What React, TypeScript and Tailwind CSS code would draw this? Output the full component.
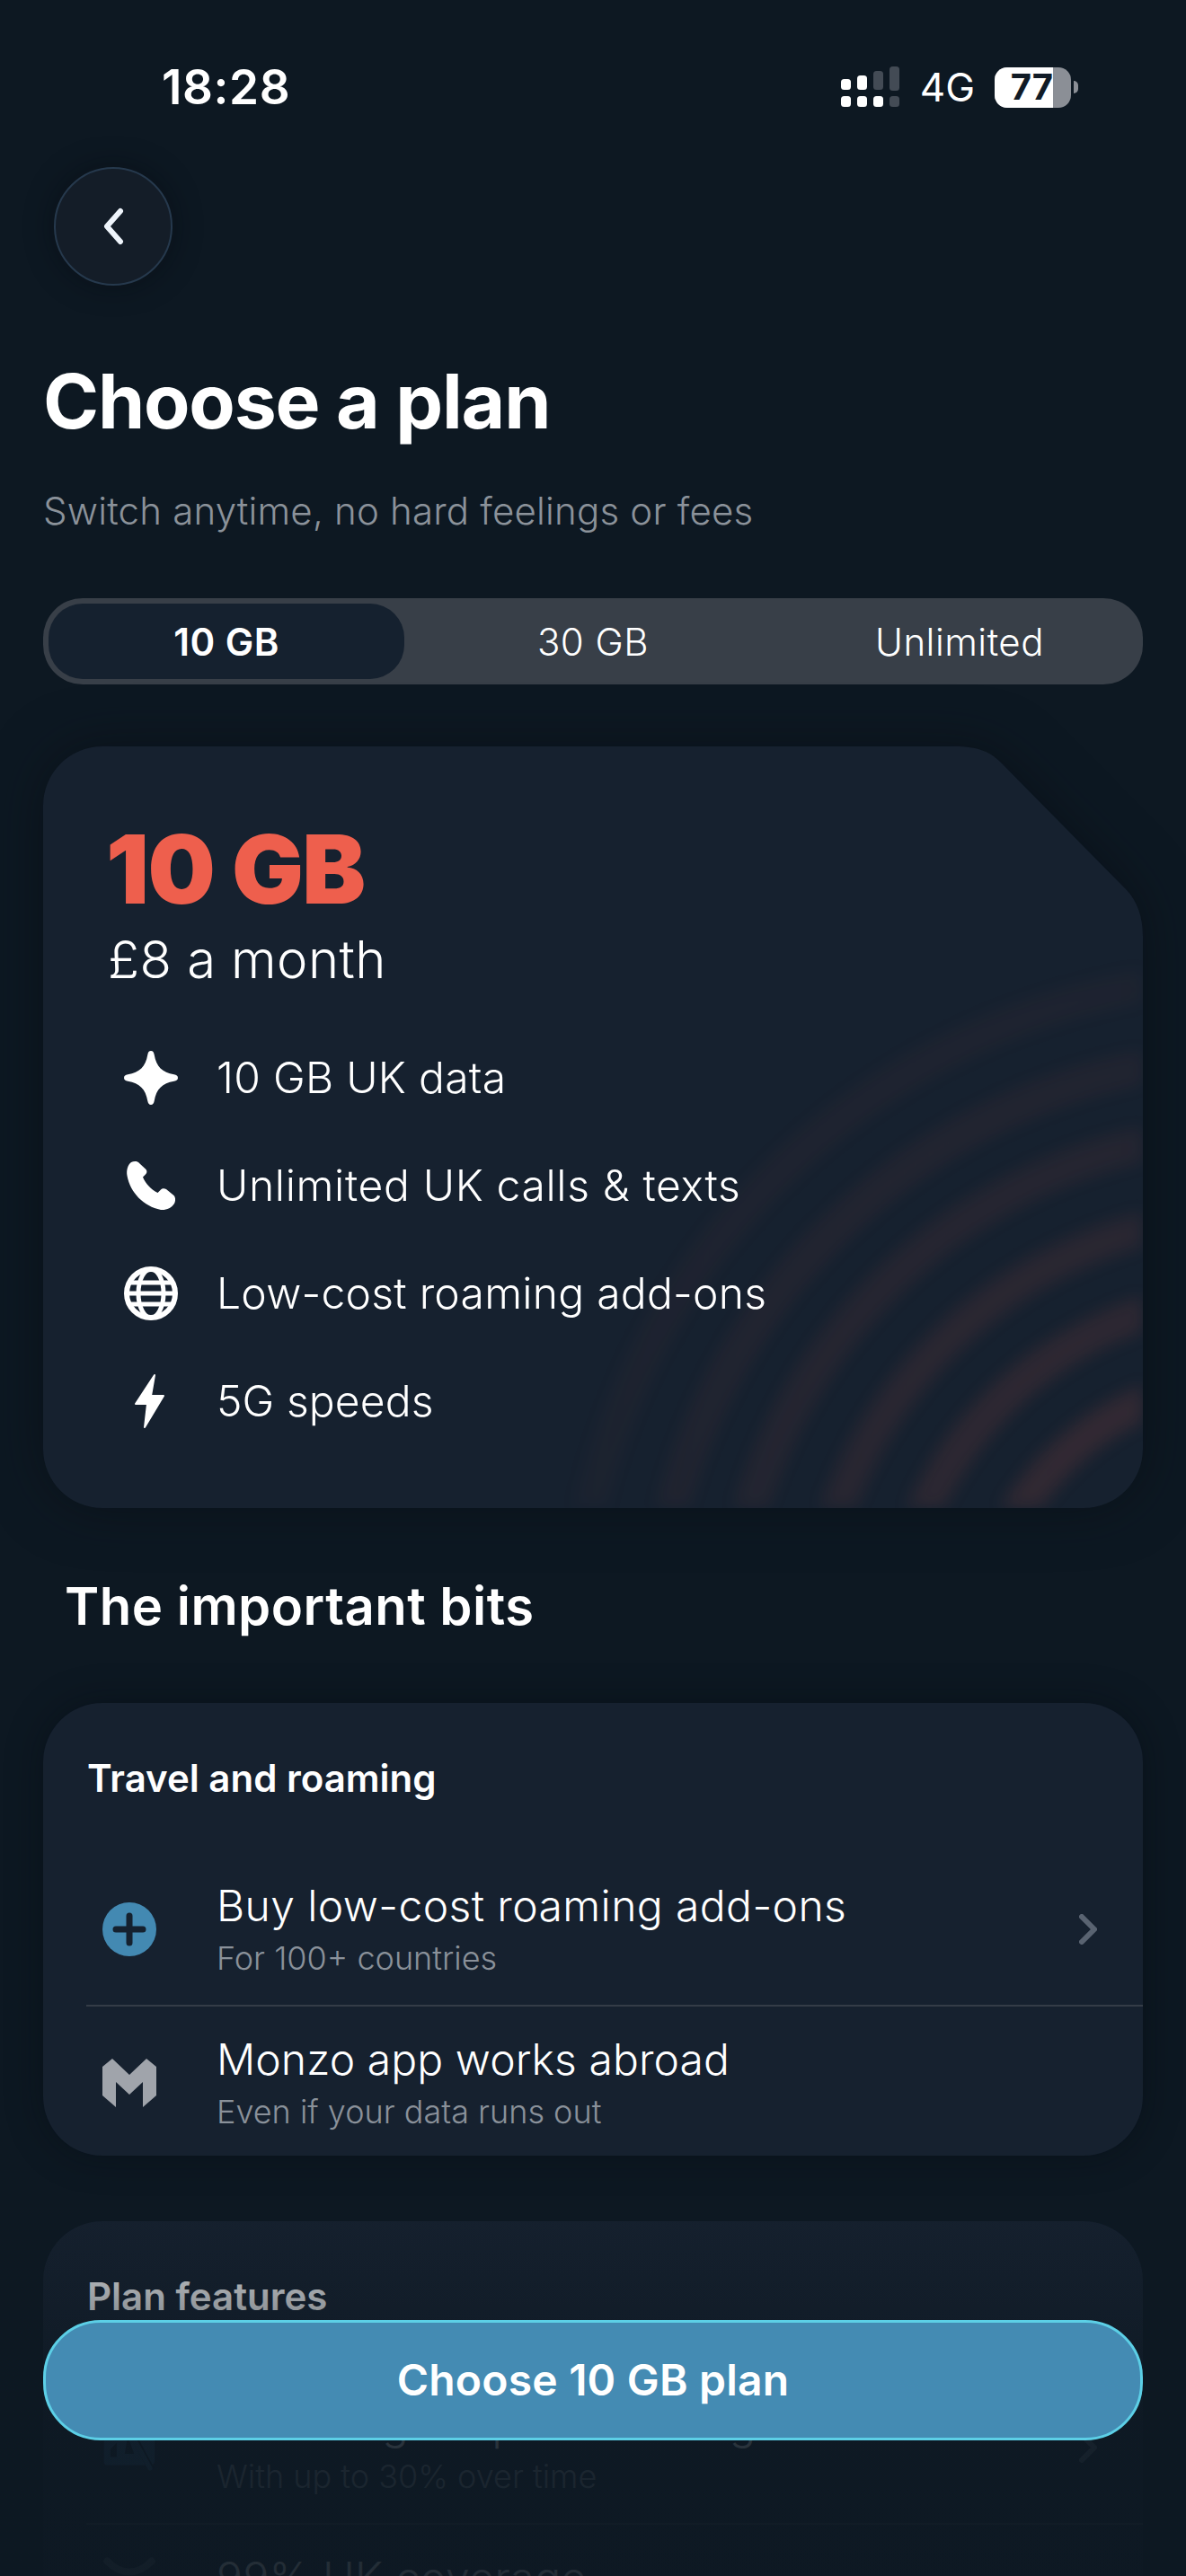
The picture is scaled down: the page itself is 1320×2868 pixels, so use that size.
import type { ReactNode } from 'react'

function SignalIcon() {
  return (
    <svg width="66" height="46" viewBox="0 0 66 46">
      <rect x="0" y="14" width="11" height="12" rx="3.500" fill="#fff" />
      <rect x="18" y="10" width="11" height="16" rx="3.500" fill="#fff" />
      <rect x="36" y="5" width="11" height="21" rx="3.500" fill="#434b55" />
      <rect x="54" y="0" width="11" height="27" rx="3.500" fill="#434b55" />
      <rect x="0" y="33" width="11" height="12" rx="3.500" fill="#fff" />
      <rect x="18" y="33" width="11" height="12" rx="3.500" fill="#fff" />
      <rect x="36" y="33" width="11" height="12" rx="3.500" fill="#fff" />
      <rect x="54" y="33" width="11" height="12" rx="3.500" fill="#434b55" />
    </svg>
  )
}

function StarIcon() {
  return (
    <svg width="60" height="60" viewBox="0 0 60 60" fill="#fff">
      <path d="M30 0c2.200 0 3.200 1.600 3.700 4.200C36 17.500 42.500 24 55.800 26.300c2.600.5 4.200 1.500 4.200 3.700s-1.600 3.200-4.200 3.700C42.500 36 36 42.500 33.700 55.800c-.5 2.600-1.500 4.200-3.700 4.200s-3.200-1.600-3.700-4.200C24 42.500 17.500 36 4.200 33.700 1.600 33.200 0 32.200 0 30s1.600-3.200 4.200-3.700C17.500 24 24 17.500 26.300 4.200 26.800 1.600 27.800 0 30 0Z" />
    </svg>
  )
}

function PhoneIcon() {
  return (
    <svg width="60" height="60" viewBox="0 0 60 60" fill="#fff">
      <path d="M8 4C11 2.500 15 2.500 17 5L24.500 12C26 14 25.500 16 24 17.500L21 20.500C24 28 30 34 37.500 38L41 34.500C42.500 33 45 33 47 34L55.500 41C57.500 43 57.500 47.500 56 50C53 55 47 57.500 41 57C22 53 7 38 3.500 19C2.500 13 4 7 8 4Z" />
    </svg>
  )
}

function GlobeIcon() {
  return (
    <svg width="60" height="60" viewBox="0 0 60 60" fill="none" stroke="#fff" strokeWidth="5">
      <circle cx="30" cy="30" r="27" strokeWidth="6" />
      <ellipse cx="30" cy="30" rx="14" ry="27" />
      <path d="M4 18H56M2 30H58M4 42H56" />
    </svg>
  )
}

function BoltIcon() {
  return (
    <svg width="60" height="60" viewBox="0 0 60 60" fill="#fff" stroke="#fff" strokeWidth="2" strokeLinejoin="round">
      <path d="M34 1L13 33H26L23 59L44 24H30Z" />
    </svg>
  )
}

function PlusIcon() {
  return (
    <svg width="60" height="60" viewBox="0 0 60 60">
      <circle cx="30" cy="30" r="30" fill="#4389b2" />
      <path d="M30 15V45M15 30H45" stroke="#15212f" strokeWidth="7" strokeLinecap="round" />
    </svg>
  )
}

function MonzoIcon() {
  return (
    <svg width="60" height="54" viewBox="0 0 60 54" fill="#a0a4ab">
      <path d="M0 9L11 0L30 18L49 0L60 9V41L45 54V26L30 40L15 26V54L0 41Z" />
    </svg>
  )
}

function SlashedTagIcon() {
  return (
    <svg width="68" height="64" viewBox="0 0 68 64" fill="#2a5070">
      <path d="M2 4H66V48C66 52 64 54 60 54H6C3 54 2 52 2 50Z" />
      <path d="M10 34L18 26V44H10ZM32 18L40 40H28Z" fill="#0f1b27" />
      <path d="M34 8L62 60" stroke="#0f1b27" strokeWidth="8" />
      <path d="M30 4L60 58" stroke="#2a5070" strokeWidth="6" strokeLinecap="round" />
    </svg>
  )
}

function SignalArcIcon() {
  return (
    <svg width="68" height="54" viewBox="0 0 68 54" fill="none" stroke="#4a5663" strokeWidth="9" strokeLinecap="round">
      <path d="M6 6C24 24 44 24 62 6" />
    </svg>
  )
}

function Chevron() {
  return (
    <svg width="20" height="34" viewBox="0 0 20 34" fill="none" stroke="#596371" strokeWidth="6" strokeLinecap="round" strokeLinejoin="round">
      <path d="M3 3L17 17L3 31" />
    </svg>
  )
}

const features = [
  { icon: <StarIcon />, text: '10 GB UK data', tracking: 'tracking-[0.3px]' },
  { icon: <PhoneIcon />, text: 'Unlimited UK calls & texts', tracking: 'tracking-[0.65px]' },
  { icon: <GlobeIcon />, text: 'Low-cost roaming add-ons', tracking: 'tracking-[0.25px]' },
  { icon: <BoltIcon />, text: '5G speeds', tracking: 'tracking-[0.1px]' },
]

function Stripes() {
  return (
    <svg className="absolute inset-0 blur-[9px]" width="1224" height="848" viewBox="0 0 1224 848" fill="none">
      <defs>
        <radialGradient id="stripeFade" gradientUnits="userSpaceOnUse" cx="1224" cy="848" r="780">
          <stop offset="0" stopColor="#ee5f4d" stopOpacity="0.15" />
          <stop offset="0.45" stopColor="#ee5f4d" stopOpacity="0.08" />
          <stop offset="0.8" stopColor="#ee5f4d" stopOpacity="0.025" />
          <stop offset="1" stopColor="#ee5f4d" stopOpacity="0" />
        </radialGradient>
      </defs>
      {[315, 408, 498, 590, 674, 763].map(r => (
        <circle key={r} cx="1352" cy="1019" r={r} stroke="url(#stripeFade)" strokeWidth="38" />
      ))}
    </svg>
  )
}

function Row({ icon, title, sub, chevron, divider, tracking, className }: {
  icon: ReactNode
  title: string
  sub?: string
  chevron?: boolean
  divider?: boolean
  tracking?: string
  className?: string
}) {
  return (
    <div className={`ml-[48px] pl-[18px] pr-[51px] flex items-center ${divider ? 'border-b-[2px] border-[#343c47]' : ''} ${className}`}>
      <div className="w-[60px] flex justify-center shrink-0">{icon}</div>
      <div className="ml-[67px] flex-1">
        <p className={`text-[48px] leading-[58px] font-light text-white ${tracking}`}>{title}</p>
        {sub && <p className="mt-[6px] text-[36px] leading-[46px] font-light text-[#8a919a]">{sub}</p>}
      </div>
      {chevron && <Chevron />}
    </div>
  )
}

export default function App() {
  return (
    <div className="relative h-[2868px] w-[1320px] overflow-hidden bg-[#0d1822] font-['Inter',sans-serif] text-white">
      <div className="h-[186px] pt-[8px] pl-[180px] pr-[120px] flex items-center justify-between">
        <span className="text-[53px] font-semibold leading-none tracking-[0.6px]">18:28</span>
        <div className="flex items-center">
          <SignalIcon />
          <span className="ml-[22px] text-[44px] leading-none">4G</span>
          <div className="ml-[22px] flex items-center">
            <div className="flex h-[45px] w-[85px] rounded-[14px] bg-[#8b8f96]">
              <div className="flex w-[65px] items-center justify-end rounded-l-[14px] bg-white text-[40px] font-bold leading-none text-[#111b26]">77</div>
            </div>
            <div className="ml-[3px] h-[14px] w-[5px] rounded-r-full bg-[#8b8f96]"></div>
          </div>
        </div>
      </div>

      <button className="ml-[60px] flex h-[132px] w-[132px] items-center justify-center rounded-full border-2 border-[#26394d] bg-[#141d28] shadow-[0_0_30px_rgba(5,10,15,0.5)]">
        <svg width="28" height="46" viewBox="0 0 28 46" fill="none" stroke="#eef4fb" strokeWidth="6" strokeLinecap="round" strokeLinejoin="round">
          <path d="M22 6L7 23L22 40" />
        </svg>
      </button>

      <h1 className="mt-[81px] ml-[48px] text-[84px] font-bold leading-[96px] tracking-[-1.2px]">Choose a plan</h1>
      <p className="mt-[48px] ml-[48px] text-[42px] font-light leading-[52px] tracking-[0.2px] text-[#8b929a]">Switch anytime, no hard feelings or fees</p>

      <div className="mt-[71px] mx-[48px] grid h-[96px] grid-cols-3 rounded-[44px] bg-[#383f48] text-[42px] font-light tracking-[0.5px]">
        <div className="p-[6px]">
          <div className="flex h-full items-center justify-center rounded-[38px] bg-[#15212f] font-semibold">10 GB</div>
        </div>
        <div className="flex items-center justify-center">30 GB</div>
        <div className="flex items-center justify-center">Unlimited</div>
      </div>

      <div className="mt-[69px] mx-[48px] drop-shadow-[0_0_30px_rgba(5,10,15,0.5)]">
        <div className="relative h-[848px] bg-[#16212f] [clip-path:path('M66_0H1015C1040_0_1055_6_1067_19L1205_159C1218_172_1224_190_1224_212V782A66_66_0_0_1_1158_848H66A66_66_0_0_1_0_782V66A66_66_0_0_1_66_0Z')]">
          <Stripes />
          <div className="relative pt-[85px]">
            <p className="ml-[70px] text-[106px] font-black leading-[104px] tracking-[-1.5px] text-[#ee5f4d]">10 GB</p>
            <p className="mt-[18px] ml-[72px] text-[58px] font-light leading-[60px] tracking-[0.4px]">£8 a month</p>
            <div className="mt-[42px] pl-[90px]">
              {features.map(f => (
                <div key={f.text} className="flex h-[120px] items-center gap-[43px]">
                  <div className="shrink-0">{f.icon}</div>
                  <span className={`text-[48px] font-light ${f.tracking}`}>{f.text}</span>
                </div>
              ))}
            </div>
          </div>
        </div>
      </div>

      <h2 className="mt-[74px] ml-[72px] text-[58px] font-semibold leading-[70px] tracking-[0.5px]">The important bits</h2>

      <div className="mt-[73px] mx-[48px] h-[504px] rounded-[66px] bg-[#16212f] pt-[59px] shadow-[0_0_40px_rgba(5,10,15,0.4)]">
        <h3 className="ml-[49px] text-[42px] font-semibold leading-[50px]">Travel and roaming</h3>
        <Row className="mt-[88px] pb-[29px]" tracking="tracking-[0.4px]" icon={<PlusIcon />} title="Buy low-cost roaming add-ons" sub="For 100+ countries" chevron divider />
        <Row className="pt-[30px]" tracking="tracking-[0.1px]" icon={<MonzoIcon />} title="Monzo app works abroad" sub="Even if your data runs out" />
      </div>

      <div className="mt-[73px] mx-[48px] rounded-[66px] bg-[#16212f] pt-[59px] pb-[40px]">
        <h3 className="ml-[49px] text-[42px] font-semibold leading-[50px]">Plan features</h3>
        <Row className="mt-[88px] pb-[29px]" tracking="tracking-[0.5px]" icon={<SlashedTagIcon />} title="Reducing bill price as long" sub="With up to 30% over time" chevron divider />
        <Row className="pt-[30px]" tracking="tracking-[0.5px]" icon={<SignalArcIcon />} title="99% UK coverage" />
      </div>

      {/* fade under the sticky button */}
      <div className="absolute inset-x-0 bottom-0 h-[430px] bg-gradient-to-b from-[#0d182200] via-[#0d1822e0] via-[60%] to-[#0d1822e8]"></div>

      <button className="absolute bottom-[151px] left-[48px] right-[48px] flex h-[134px] items-center justify-center rounded-[64px] border-[3px] border-[#5ccfe6] bg-[#448bb3] text-[48px] font-semibold tracking-[0.2px] text-white">
        Choose 10 GB plan
      </button>
    </div>
  )
}
